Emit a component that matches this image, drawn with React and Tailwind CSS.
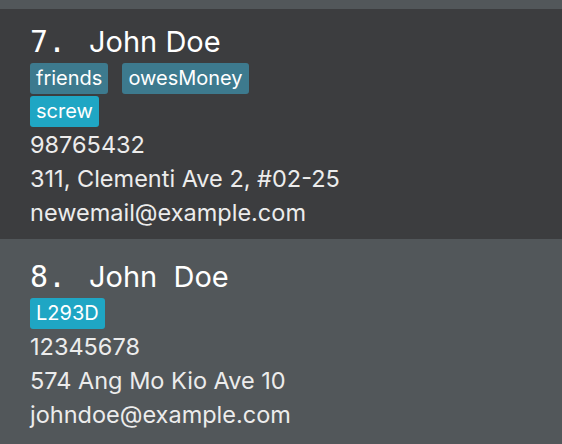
export default function App() {
  const people = [
    {
      id: 7,
      name: "John Doe",
      tags: [
        { label: "friends", color: "bg-[#3d7a8e]" },
        { label: "owesMoney", color: "bg-[#3d7a8e]" },
        { label: "screw", color: "bg-[#1fa6c4]" },
      ],
      phone: "98765432",
      address: "311, Clementi Ave 2, #02-25",
      email: "newemail@example.com",
      bg: "bg-[#3c3d3f]",
      pad: "pt-[15px] pb-[9px]",
    },
    {
      id: 8,
      name: "John  Doe",
      tags: [{ label: "L293D", color: "bg-[#1fa6c4]" }],
      phone: "12345678",
      address: "574 Ang Mo Kio Ave 10",
      email: "johndoe@example.com",
      bg: "bg-[#52575a]",
      pad: "pt-[20px] pb-[20px]",
    },
  ];

  return (
    <div className="w-[562px] h-[444px] overflow-hidden bg-[#52575a] font-['Inter',sans-serif] text-[#ececec]">
      <div className="h-[9px] bg-[#52575a]" />
      {people.map((p) => (
        <div key={p.id} className={`${p.bg} ${p.pad} pl-[30px]`}>
          {/* name row */}
          <div className="flex items-baseline h-[36px] leading-[36px] text-white">
            <span className="font-['DejaVu_Sans_Mono',monospace] text-[30px] w-[59px]">{p.id}.</span>
            <span className="text-[29px] whitespace-pre">{p.name}</span>
          </div>

          {/* tags */}
          <div className="flex flex-wrap max-w-[260px] gap-x-[14px] gap-y-[2px] mt-[3px]">
            {p.tags.map((t) => (
              <span
                key={t.label}
                className={`${t.color} h-[31px] leading-[31px] px-[6px] rounded-[3px] text-[20px] text-white`}
              >
                {t.label}
              </span>
            ))}
          </div>

          {/* details */}
          <div className="text-[23.5px] leading-[34px] mt-[1px]">
            <div>{p.phone}</div>
            <div>{p.address}</div>
            <div>{p.email}</div>
          </div>
        </div>
      ))}
    </div>
  );
}
